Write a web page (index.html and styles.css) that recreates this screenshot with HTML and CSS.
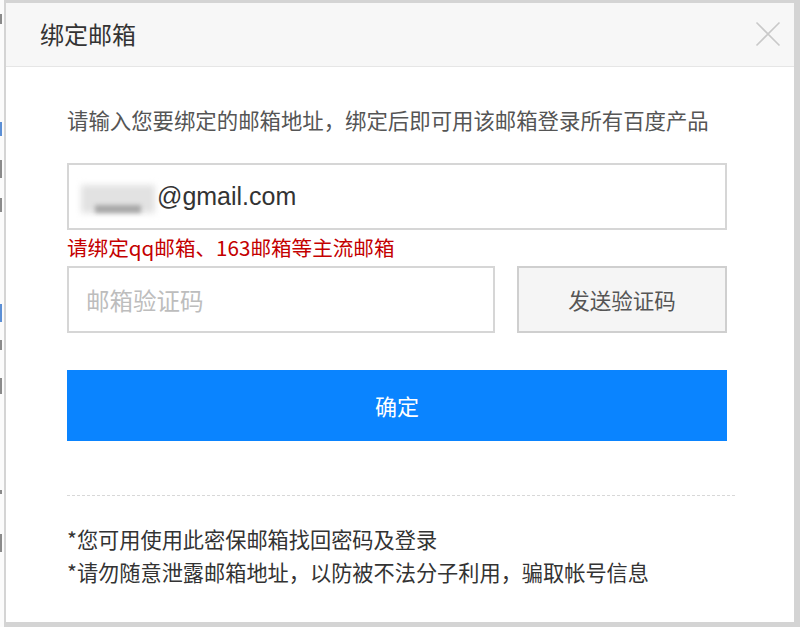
FILE: index.html
```html
<!DOCTYPE html>
<html lang="zh-CN">
<head>
<meta charset="utf-8">
<title>绑定邮箱</title>
<link rel="stylesheet" href="styles.css">
</head>
<body>
<div class="backdrop">
  <span class="bd-mark bd-1"></span>
  <span class="bd-mark bd-2 blue"></span>
  <span class="bd-mark bd-3"></span>
  <span class="bd-mark bd-4"></span>
  <span class="bd-mark bd-5 blue"></span>
  <span class="bd-mark bd-6"></span>
  <span class="bd-mark bd-7"></span>
  <span class="bd-mark bd-8"></span>
  <span class="bd-mark bd-9"></span>
</div>
<div class="dialog">
  <div class="dialog-header">
    <h1 class="dialog-title">绑定邮箱</h1>
    <span class="close" aria-label="关闭">
      <svg width="26" height="26" viewBox="0 0 26 26"><path d="M1.5 1.5 L24.5 24.5 M24.5 1.5 L1.5 24.5" stroke="#c9c9c9" stroke-width="1.6" fill="none"/></svg>
    </span>
  </div>
  <div class="dialog-body">
    <p class="intro">请输入您要绑定的邮箱地址，绑定后即可用该邮箱登录所有百度产品</p>
    <div class="field email-field">
      <span class="masked"><span class="mask-light"></span><span class="mask-dark"></span></span><span class="email-text">@gmail.com</span>
    </div>
    <p class="error">请绑定qq邮箱、163邮箱等主流邮箱</p>
    <div class="code-row">
      <div class="field code-field"><span class="placeholder">邮箱验证码</span></div>
      <div class="send-btn">发送验证码</div>
    </div>
    <div class="confirm-btn">确定</div>
    <div class="divider"></div>
    <div class="notes">
      <p>*您可用使用此密保邮箱找回密码及登录</p>
      <p>*请勿随意泄露邮箱地址，以防被不法分子利用，骗取帐号信息</p>
    </div>
  </div>
</div>
</body>
</html>
```
FILE: styles.css
```css
* { box-sizing: border-box; }
html, body { margin: 0; padding: 0; }
body {
  width: 800px;
  height: 627px;
  overflow: hidden;
  display: flex;
  background: #ffffff;
  font-family: "Noto Sans CJK SC", "Noto Sans", sans-serif;
  color: #333;
}
p, h1 { margin: 0; }

.backdrop {
  width: 4px;
  flex: none;
  overflow: hidden;
  background: #fbfbfb;
  display: flex;
  flex-direction: column;
  align-items: flex-start;
}
.bd-mark {
  display: block;
  width: 2px;
  height: 14px;
  border-right: 2px solid #8a8a8a;
}
.bd-mark.blue { border-right-color: #5b8fd6; }
.bd-1 { margin-top: 14px; height: 10px; }
.bd-2 { margin-top: 98px; }
.bd-3 { margin-top: 24px; height: 18px; }
.bd-4 { margin-top: 20px; }
.bd-5 { margin-top: 92px; height: 18px; }
.bd-6 { margin-top: 18px; height: 10px; }
.bd-7 { margin-top: 28px; height: 16px; }
.bd-8 { margin-top: 96px; height: 4px; }
.bd-9 { margin-top: 40px; height: 18px; }

.dialog {
  flex: 1;
  min-width: 0;
  height: 627px;
  border-style: solid;
  border-color: #d4d4d4;
  border-width: 3px 6px 5px 2px;
  background: #fff;
  display: flex;
  flex-direction: column;
}
.dialog-header {
  height: 64px;
  flex: none;
  background: #f7f7f7;
  border-bottom: 1px solid #e6e6e6;
  display: flex;
  align-items: center;
  justify-content: space-between;
  padding: 0 13px 2px 34px;
}
.dialog-title {
  font-size: 24px;
  font-weight: 400;
  color: #333;
  line-height: 30px;
}
.close { display: flex; width: 26px; height: 26px; }

.dialog-body {
  padding: 38px 67px 0 61px;
  display: flex;
  flex-direction: column;
  min-width: 0;
}
.intro {
  font-size: 21.4px;
  line-height: 30px;
  color: #555;
  white-space: nowrap;
}
.field {
  border: 2px solid #d6d6d6;
  height: 67px;
  display: flex;
  align-items: center;
  background: #fff;
}
.email-field {
  margin-top: 28px;
  padding-left: 12px;
}
.masked {
  position: relative;
  width: 76px;
  height: 36px;
  display: inline-block;
  margin-top: 4px;
}
.mask-light {
  position: absolute;
  left: 0; top: 4px;
  width: 74px; height: 28px;
  background: #e2e2e2;
  filter: blur(3px);
}
.mask-dark {
  position: absolute;
  left: 14px; top: 24px;
  width: 46px; height: 8px;
  background: #a8a8a8;
  filter: blur(2px);
}
.email-text {
  font-family: "Liberation Sans", Arial, sans-serif;
  font-size: 25px;
  color: #333;
}
.error {
  margin-top: 2px;
  font-size: 20.6px;
  line-height: 30px;
  color: #c40000;
}
.code-row {
  margin-top: 4px;
  display: flex;
  gap: 22px;
}
.code-field {
  width: 428px;
  padding-left: 17px;
}
.placeholder {
  font-size: 23.5px;
  color: #bdbdbd;
}
.send-btn {
  flex: 1;
  height: 67px;
  border: 2px solid #cfcfcf;
  background: #f5f5f5;
  display: flex;
  align-items: center;
  justify-content: center;
  font-size: 21.5px;
  color: #555;
}
.confirm-btn {
  margin-top: 37px;
  height: 71px;
  background: #0a84ff;
  color: #fff;
  font-size: 22px;
  display: flex;
  align-items: center;
  justify-content: center;
  padding-bottom: 2px;
}
.divider {
  margin-top: 54px;
  width: 668px;
  border-top: 1px dashed #d8d8d8;
}
.notes {
  margin-top: 26px;
  font-size: 21.2px;
  line-height: 33px;
  color: #333;
  white-space: nowrap;
}
```
